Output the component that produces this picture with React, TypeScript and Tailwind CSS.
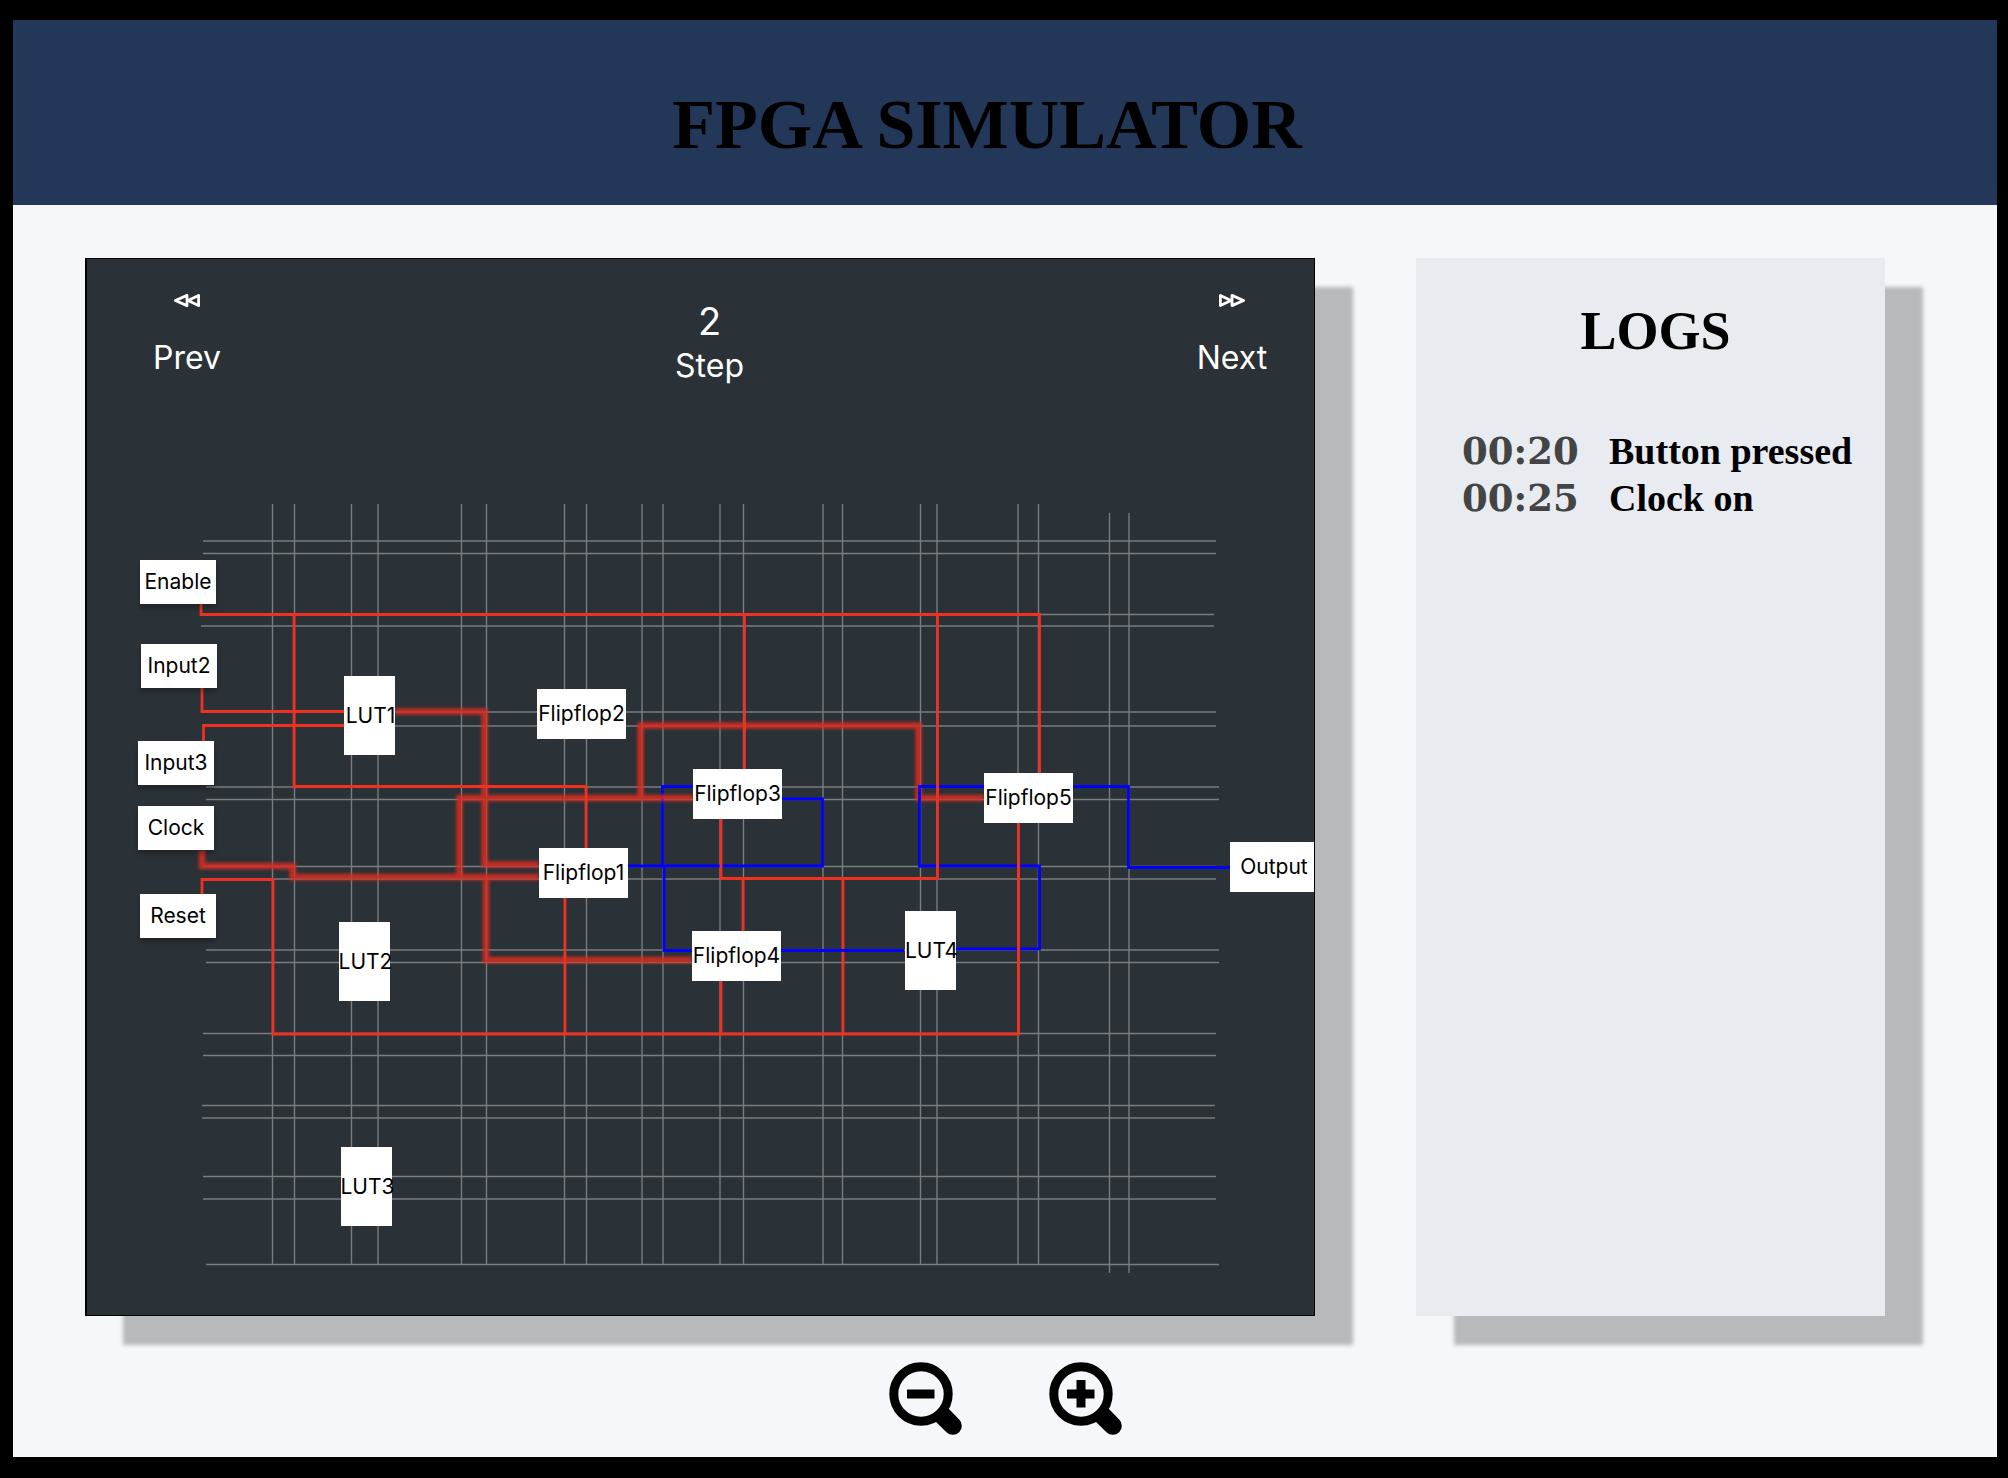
import React from "react";

/* Visible window of the board, in board coordinates. */
const VIEW = { x: 87, y: 480, width: 1227, height: 835 };

const COLUMNS = [272.5, 294.5, 351.5, 378, 461.5, 486.5, 564.5, 586.5, 642, 663, 720, 743.5, 823, 842.5, 920.5, 937, 1018, 1038.5];
const OUTER_COLUMNS = [1109.5, 1129];

const ROWS: [number, number][] = [
  [541, 203], [553.5, 203], [614.5, 201], [626, 201], [712, 203], [726, 203],
  [787, 206], [799.5, 206], [866.5, 203], [879, 203], [950, 206], [962.5, 206],
  [1033.5, 203], [1055.5, 203], [1105.5, 202], [1118, 202], [1176.5, 203], [1199, 203], [1264.5, 206],
];

const BLUE_WIRES = [
  "M628 866H822.5V799H782",
  "M662.5 866V786.5H693",
  "M664 866V950.5H692",
  "M956 949H1039.5V866H919.5",
];

const BLUE_TOP_WIRES = [
  "M919.5 867.5V786.5H984",
  "M1073 786.5H1128.5V867.5H1230",
  "M781 950.5H904",
];

const RED_WIRES = [
  "M201 604V614.5H1039.5V773",
  "M294 614V786.5H586V848",
  "M744.5 614V769",
  "M937.5 614V878.5H721V819",
  "M743 878V931",
  "M843 878V1035",
  "M202 688V711.5H344",
  "M203.5 741V725.5H344",
  "M202 894V879.5H273V1034H1018.5V823",
  "M565 898V1034",
  "M721 981V1034",
];

const ACTIVE_WIRES = [
  "M395 711.5H484.5V864.5H539",
  "M202 850V866H292.5V877H539",
  "M459.5 877V798H693",
  "M640.5 798V725.5H918.5V798H984",
  "M486 877V960H692",
];

type Cell = { name: string; x: number; y: number; kind: keyof typeof CELL_STYLES };

const CELL_STYLES = {
  pin: "h-11 w-[76px] shadow-[0_4px_4px_rgba(0,0,0,0.25)]",
  lut: "h-[79px] w-[51px] pl-[2px]",
  flipflop: "h-[50px] w-[89px]",
  output: "h-[50px] w-[84px] pl-1",
};

const CELLS: Cell[] = [
  { name: "Enable", x: 140, y: 560, kind: "pin" },
  { name: "Input2", x: 141, y: 644, kind: "pin" },
  { name: "Input3", x: 138, y: 741, kind: "pin" },
  { name: "Clock", x: 138, y: 806, kind: "pin" },
  { name: "Reset", x: 140, y: 894, kind: "pin" },
  { name: "LUT1", x: 344, y: 676, kind: "lut" },
  { name: "LUT2", x: 339, y: 922, kind: "lut" },
  { name: "LUT3", x: 341, y: 1147, kind: "lut" },
  { name: "LUT4", x: 905, y: 911, kind: "lut" },
  { name: "Flipflop1", x: 539, y: 848, kind: "flipflop" },
  { name: "Flipflop2", x: 537, y: 689, kind: "flipflop" },
  { name: "Flipflop3", x: 693, y: 769, kind: "flipflop" },
  { name: "Flipflop4", x: 692, y: 931, kind: "flipflop" },
  { name: "Flipflop5", x: 984, y: 773, kind: "flipflop" },
  { name: "Output", x: 1230, y: 842, kind: "output" },
];

const LOGS = [
  { time: "00:20", message: "Button pressed" },
  { time: "00:25", message: "Clock on" },
];

function Wires() {
  return (
    <svg
      className="block"
      width={VIEW.width}
      height={VIEW.height}
      viewBox={`${VIEW.x} ${VIEW.y} ${VIEW.width} ${VIEW.height}`}
      fill="none"
      aria-hidden="true"
    >
      <defs>
        <filter id="glow" filterUnits="userSpaceOnUse" x="180" y="680" width="820" height="300" colorInterpolationFilters="sRGB">
          <feGaussianBlur stdDeviation="1.5" />
        </filter>
      </defs>
      <g stroke="#7b7d7e" strokeWidth="1.4">
        {COLUMNS.map((x) => <path key={x} d={`M${x} 504V1264`} />)}
        {OUTER_COLUMNS.map((x) => <path key={x} d={`M${x} 513V1273`} />)}
        {ROWS.map(([y, x]) => <path key={y} d={`M${x} ${y}H${x + 1013}`} />)}
      </g>
      <g stroke="#0000ff" strokeWidth="2.8">
        {BLUE_WIRES.map((d) => <path key={d} d={d} />)}
      </g>
      <g stroke="#d92c20" strokeWidth="6.6" opacity="0.86" filter="url(#glow)">
        {ACTIVE_WIRES.map((d) => <path key={d} d={d} />)}
      </g>
      <g stroke="#f03122" strokeWidth="2.8">
        {RED_WIRES.map((d) => <path key={d} d={d} />)}
      </g>
      <g stroke="#0000ff" strokeWidth="2.8">
        {BLUE_TOP_WIRES.map((d) => <path key={d} d={d} />)}
      </g>
      <path d="M937.5 780V794M1018.5 860V1034" stroke="#f03122" strokeWidth="2.8" />
    </svg>
  );
}

function Board() {
  return (
    <div className="relative">
      <Wires />
      {CELLS.map((cell) => (
        <div
          key={cell.name}
          className={`absolute flex items-center justify-center bg-white text-[21px] leading-6 whitespace-nowrap text-black ${CELL_STYLES[cell.kind]}`}
          style={{ left: cell.x - VIEW.x, top: cell.y - VIEW.y }}
        >
          {cell.name}
        </div>
      ))}
    </div>
  );
}

function SkipIcon({ className = "" }: { className?: string }) {
  return (
    <svg className={className} width="28" height="15" viewBox="0 0 28 15" fill="none" stroke="#fff" strokeWidth="2.8" strokeLinejoin="round" aria-hidden="true">
      <path d="M2.4 2.4V12.6L13 7.5Z" />
      <path d="M14 2.4V12.6L25.6 7.5Z" />
    </svg>
  );
}

function Magnifier({ children }: { children: React.ReactNode }) {
  return (
    <svg width="73" height="73" viewBox="0 0 73 73" aria-hidden="true">
      <circle cx="32" cy="32" r="27.2" fill="none" stroke="#000" strokeWidth="9" />
      <path d="M46 59L59 46L70.2 57.5A8.9 8.9 0 0 1 57.5 70.2Z" />
      {children}
    </svg>
  );
}

export default function App() {
  return (
    <div className="flex min-h-screen bg-black pt-5 pr-[11px] pb-[21px] pl-[13px] font-['Inter',sans-serif]">
      <div className="flex min-w-0 flex-1 flex-col bg-[#f5f7fb]">
        <header className="bg-[#233759] pt-[70px] pr-9 pb-[45px] text-center">
          <h1 className="font-['Liberation_Serif',serif] text-[70px] leading-[70px] font-bold text-black">FPGA SIMULATOR</h1>
        </header>

        <main className="flex flex-1 flex-col pt-[53px] pr-28 pb-[22px] pl-[72px]">
          <div className="grid grid-cols-[minmax(0,1230fr)_minmax(0,469fr)] gap-x-[101px]">
            <section className="overflow-hidden border border-l-2 border-black bg-[#2a3137] shadow-[38px_29px_4px_#b8b9bb]" aria-label="Circuit">
              <div className="flex h-[221px] items-start justify-between pt-[34px] pr-8 pl-[50px] text-[32px] leading-10 text-white">
                <button type="button" className="flex w-[100px] flex-col items-center gap-[30px]">
                  <SkipIcon className="rotate-180" />
                  <span>Prev</span>
                </button>
                <div className="flex flex-col items-center gap-[5px] pt-2">
                  <span className="text-[38px]">2</span>
                  <span>Step</span>
                </div>
                <button type="button" className="flex w-[100px] flex-col items-center gap-[30px]">
                  <SkipIcon />
                  <span>Next</span>
                </button>
              </div>
              <Board />
            </section>

            <aside className="bg-[#e8ebf0] pt-[46px] pl-[46px] font-['Liberation_Serif',serif] font-bold shadow-[38px_29px_4px_#b8b9bb]">
              <h2 className="pr-9 text-center text-[54px] leading-[54px] text-black">LOGS</h2>
              <ul className="mt-[70px] text-[38px] leading-[47px] text-black">
                {LOGS.map((log) => (
                  <li key={log.time} className="flex h-[47px] items-baseline whitespace-nowrap">
                    <time className="w-[147px] shrink-0 font-['DejaVu_Serif',serif] text-[37px] leading-[47px] text-[#444444]">{log.time}</time>
                    <span>{log.message}</span>
                  </li>
                ))}
              </ul>
            </aside>
          </div>

          <div className="mt-[46px] flex justify-center gap-[87px] pl-10">
            <button type="button" aria-label="Zoom out">
              <Magnifier>
                <path d="M18 27.5H45.5V36.5H18Z" />
              </Magnifier>
            </button>
            <button type="button" aria-label="Zoom in">
              <Magnifier>
                <path d="M18 27.5H27.5V18H36.5V27.5H45.5V36.5H36.5V45.5H27.5V36.5H18Z" />
              </Magnifier>
            </button>
          </div>
        </main>
      </div>
    </div>
  );
}
